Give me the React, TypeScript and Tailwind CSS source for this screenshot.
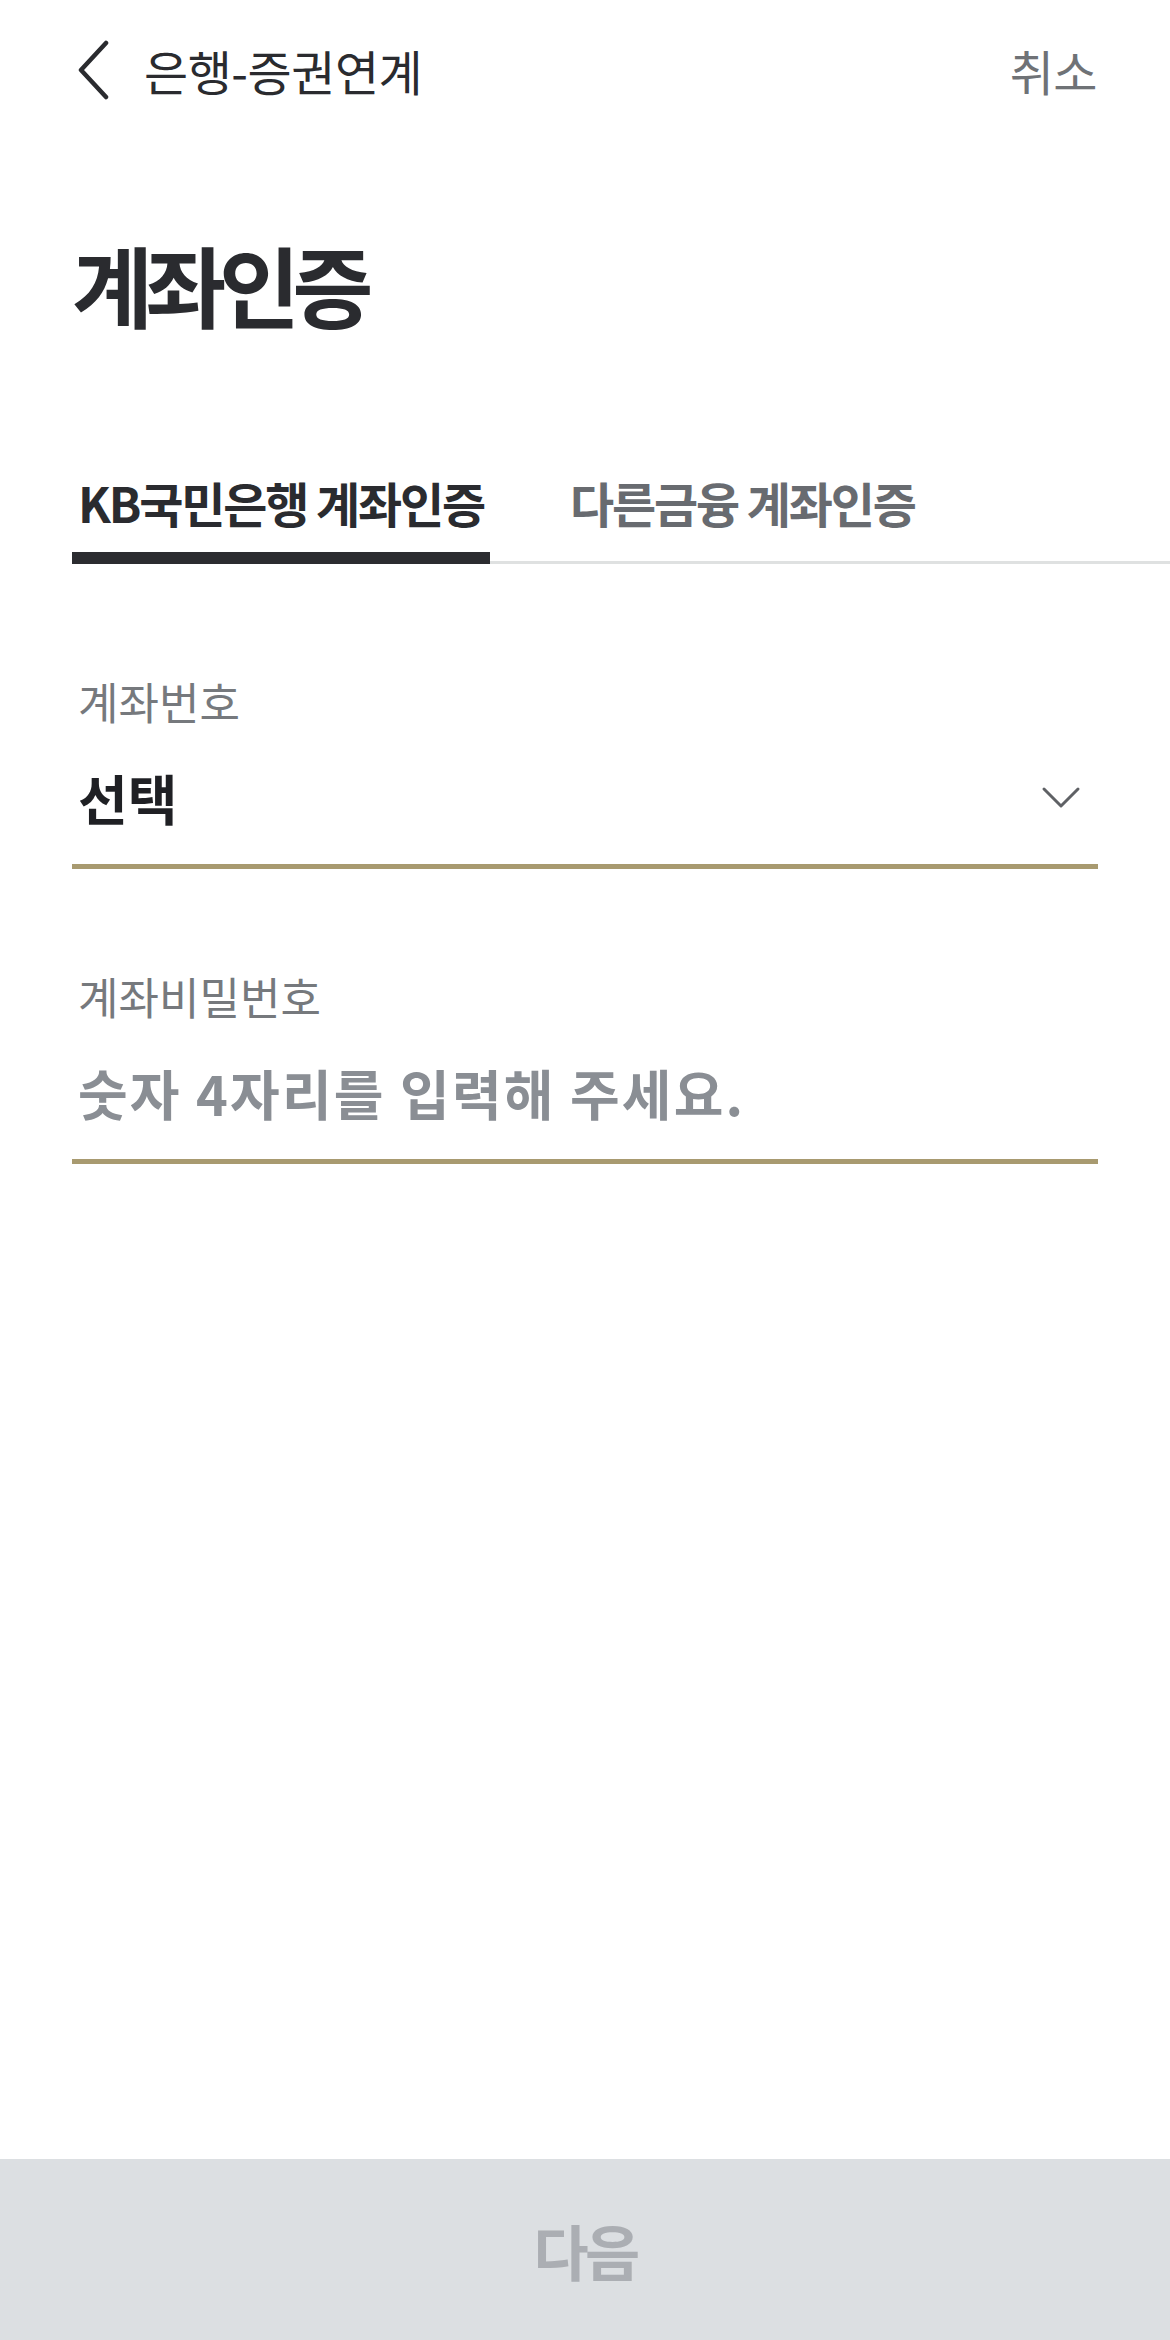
const font = { fontFamily: '"Noto Sans CJK KR", "Noto Sans", sans-serif' }

function BackIcon() {
  return (
    <svg width="40" height="60" viewBox="0 0 40 60" fill="none" className="shrink-0">
      <path d="M30 3 L5 30 L30 57" stroke="#2a2b2f" strokeWidth="4.5" strokeLinecap="round" strokeLinejoin="round" />
    </svg>
  )
}

function ChevronDown() {
  return (
    <svg width="40" height="24" viewBox="0 0 40 24" fill="none">
      <path d="M3 3 L20 20 L37 3" stroke="#5f6165" strokeWidth="3" strokeLinecap="round" strokeLinejoin="round" />
    </svg>
  )
}

function Field({ label, children }: { label: string; children: React.ReactNode }) {
  return (
    <div className="border-b-[5px] border-[#a89a70]">
      <p className="px-[6px] text-[44px] leading-none text-[#76797d]">{label}</p>
      <div className="mt-[43px] box-content flex h-[64px] items-center justify-between pb-[34px] pl-[6px] pr-[17px]">
        {children}
      </div>
    </div>
  )
}

export default function App() {
  return (
    <div className="flex h-[2340px] w-[1170px] flex-col bg-white" style={font}>
      {/* Top bar */}
      <header className="flex h-[140px] items-center justify-between pl-[76px] pr-[73px]">
        <div className="flex items-center gap-[28px]">
          <BackIcon />
          <span className="text-[48px] leading-none tracking-[-0.01em] text-[#2a2b2f]">은행-증권연계</span>
        </div>
        <span className="text-[48px] leading-none tracking-[-0.01em] text-[#6f7276]">취소</span>
      </header>

      <h1 className="mt-[99px] pl-[72px] text-[88px] font-bold leading-none tracking-[-7.5px] text-[#2a2b2f]">
        계좌인증
      </h1>

      {/* Tabs */}
      <div className="ml-[72px] mt-[151px] flex items-end border-b-[3px] border-[#dfe1e1]">
        <button className="-mb-[3px] border-b-[12px] border-[#2b2c30] px-[6px] pb-[26px] text-[48px] font-semibold leading-none tracking-[-0.045em] text-[#2a2b2f]">
          KB국민은행 계좌인증
        </button>
        <button className="ml-[80px] pb-[35px] text-[48px] font-semibold leading-none tracking-[-0.045em] text-[#686b70]">
          다른금융 계좌인증
        </button>
      </div>

      {/* Form */}
      <div className="mt-[115px] flex flex-col gap-[105px] px-[72px]">
        <Field label="계좌번호">
          <span className="text-[54px] font-bold leading-none text-[#1f2024]">선택</span>
          <ChevronDown />
        </Field>
        <Field label="계좌비밀번호">
          <span className="text-[54px] font-semibold leading-none tracking-[0.04em] text-[#8a8e94]">
            숫자 4자리를 입력해 주세요.
          </span>
        </Field>
      </div>

      <div className="flex-1" />

      <button className="flex h-[181px] w-full items-center justify-center bg-[#dcdfe2] text-[60px] font-semibold leading-none tracking-[-0.06em] text-[#abaeb3]">
        다음
      </button>
    </div>
  )
}
